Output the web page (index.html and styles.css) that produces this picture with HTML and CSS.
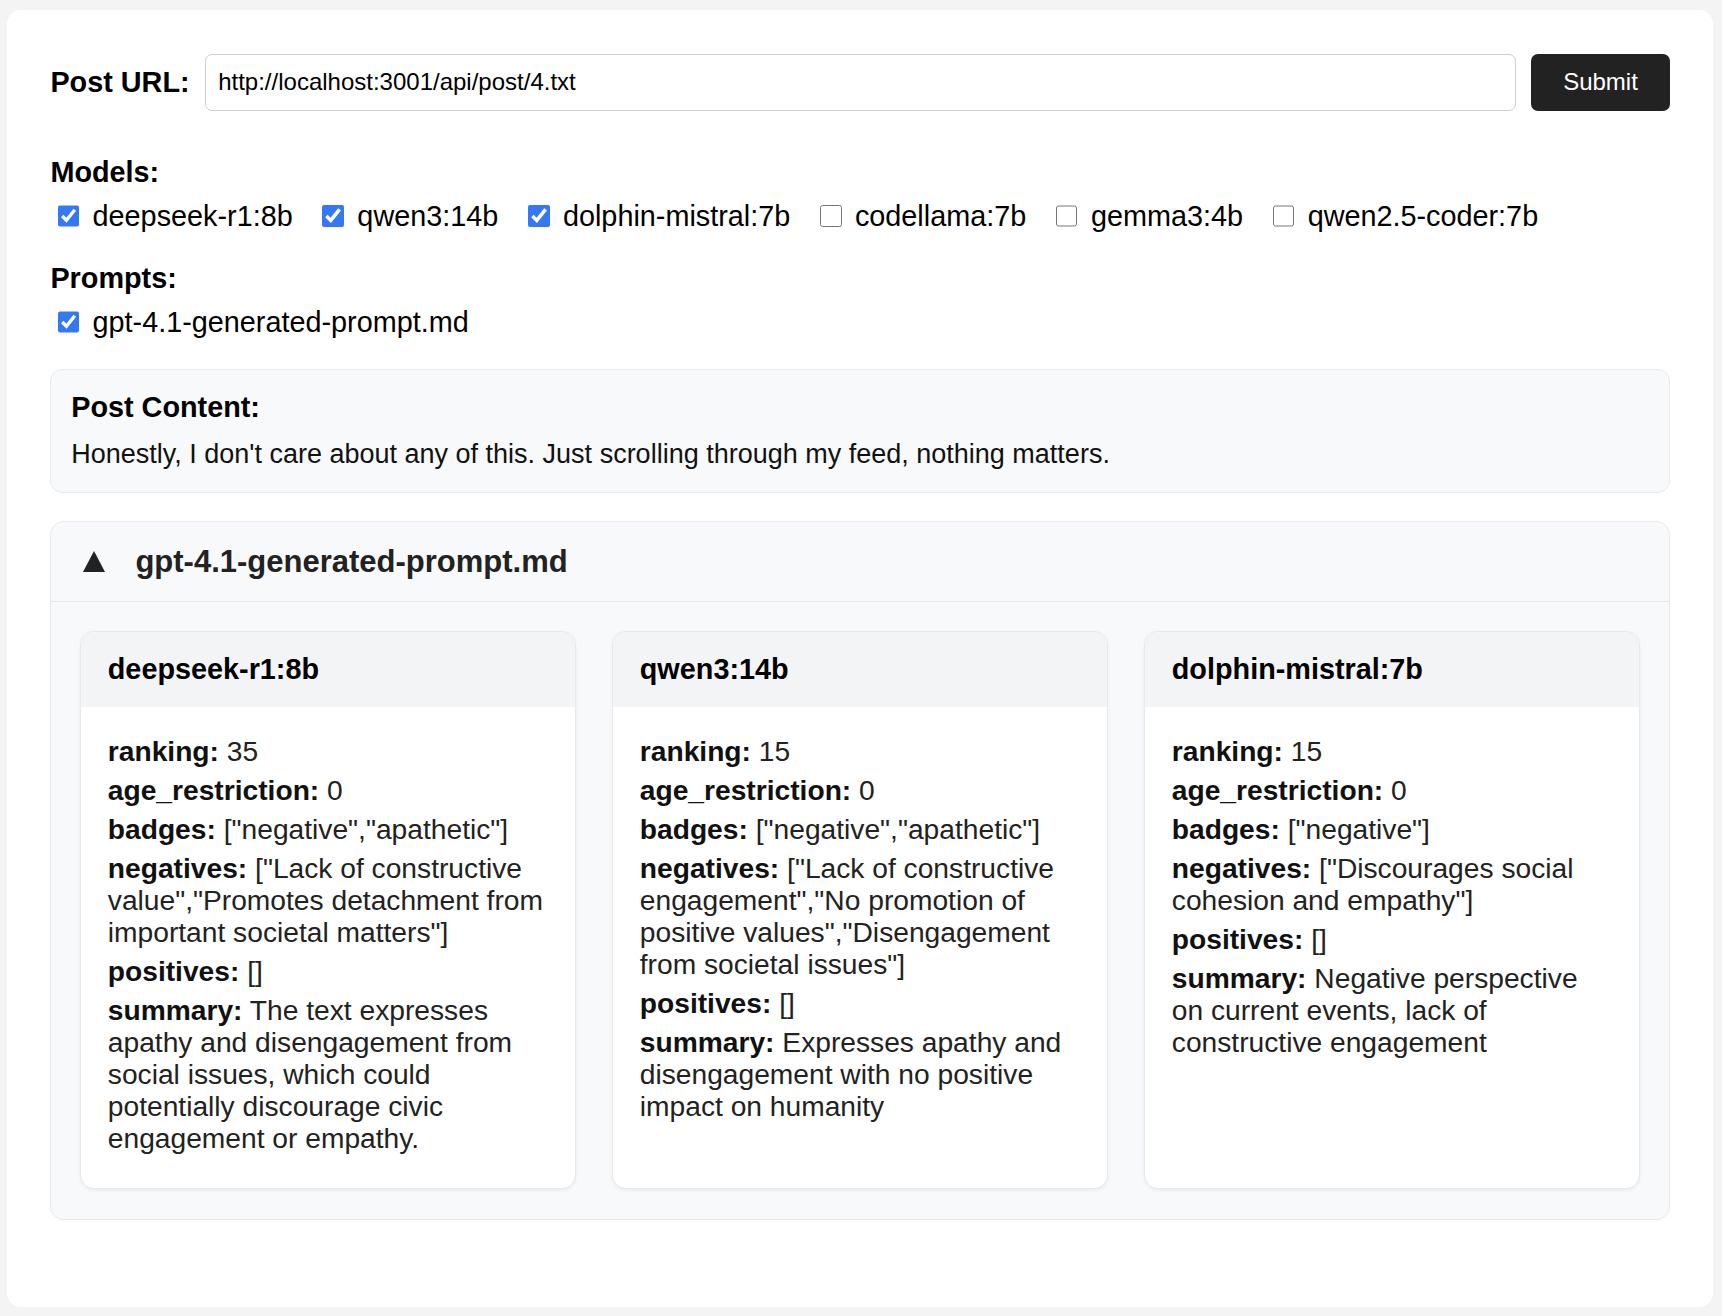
FILE: index.html
```html
<!DOCTYPE html>
<html lang="en">
<head>
<meta charset="utf-8">
<title>Post Evaluator</title>
<link rel="stylesheet" href="styles.css">
</head>
<body>
<main class="page">
  <form class="url-row">
    <label class="url-label" for="url">Post URL:</label>
    <input class="url-input" id="url" type="text" value="http://localhost:3001/api/post/4.txt">
    <button class="submit" type="button">Submit</button>
  </form>

  <section class="group models">
    <div class="group-title">Models:</div>
    <div class="options">
      <label class="opt"><input type="checkbox" checked> deepseek-r1:8b</label>
      <label class="opt"><input type="checkbox" checked> qwen3:14b</label>
      <label class="opt"><input type="checkbox" checked> dolphin-mistral:7b</label>
      <label class="opt"><input type="checkbox"> codellama:7b</label>
      <label class="opt"><input type="checkbox"> gemma3:4b</label>
      <label class="opt"><input type="checkbox"> qwen2.5-coder:7b</label>
    </div>
  </section>

  <section class="group prompts">
    <div class="group-title">Prompts:</div>
    <div class="options">
      <label class="opt"><input type="checkbox" checked> gpt-4.1-generated-prompt.md</label>
    </div>
  </section>

  <section class="post-content">
    <div class="post-title">Post Content:</div>
    <div class="post-text">Honestly, I don't care about any of this. Just scrolling through my feed, nothing matters.</div>
  </section>

  <section class="results">
    <div class="results-head">
      <svg class="tri" width="22" height="21" viewBox="0 0 22 21" aria-hidden="true"><path d="M11 0 L22 21 L0 21 Z" fill="#222"/></svg>
      <span class="results-title">gpt-4.1-generated-prompt.md</span>
    </div>
    <div class="cards">
      <article class="card">
        <div class="card-head">deepseek-r1:8b</div>
        <div class="card-body">
          <div class="item"><b>ranking:</b> 35</div>
          <div class="item"><b>age_restriction:</b> 0</div>
          <div class="item"><b>badges:</b> ["negative","apathetic"]</div>
          <div class="item"><b>negatives:</b> ["Lack of constructive value","Promotes detachment from important societal matters"]</div>
          <div class="item"><b>positives:</b> []</div>
          <div class="item"><b>summary:</b> The text expresses apathy and disengagement from social issues, which could potentially discourage civic engagement or empathy.</div>
        </div>
      </article>
      <article class="card">
        <div class="card-head">qwen3:14b</div>
        <div class="card-body">
          <div class="item"><b>ranking:</b> 15</div>
          <div class="item"><b>age_restriction:</b> 0</div>
          <div class="item"><b>badges:</b> ["negative","apathetic"]</div>
          <div class="item"><b>negatives:</b> ["Lack of constructive engagement","No promotion of positive values","Disengagement from societal issues"]</div>
          <div class="item"><b>positives:</b> []</div>
          <div class="item"><b>summary:</b> Expresses apathy and disengagement with no positive impact on humanity</div>
        </div>
      </article>
      <article class="card">
        <div class="card-head">dolphin-mistral:7b</div>
        <div class="card-body">
          <div class="item"><b>ranking:</b> 15</div>
          <div class="item"><b>age_restriction:</b> 0</div>
          <div class="item"><b>badges:</b> ["negative"]</div>
          <div class="item"><b>negatives:</b> ["Discourages social cohesion and empathy"]</div>
          <div class="item"><b>positives:</b> []</div>
          <div class="item"><b>summary:</b> Negative perspective on current events, lack of constructive engagement</div>
        </div>
      </article>
    </div>
  </section>
</main>
</body>
</html>
```
FILE: styles.css
```css
* { box-sizing: border-box; }

html, body {
  margin: 0;
  padding: 0;
}

body {
  background: #f4f4f4;
  font-family: "Liberation Sans", Arial, Helvetica, sans-serif;
  color: #111;
  font-size: 28.8px;
  line-height: 33px;
  padding: 10px 9px 9px 7px;
}

.page {
  background: #fff;
  border-radius: 14px;
  padding: 43.5px 43px 43px 43.4px;
  min-height: 1297px;
}

/* URL row */
.url-row {
  display: flex;
  align-items: center;
  gap: 15px;
  margin: 0;
}

.url-label {
  font-weight: bold;
  font-size: 28.8px;
  color: #000;
}

.url-input {
  flex: 1;
  height: 57.6px;
  border: 1.8px solid #cfcfcf;
  border-radius: 7px;
  padding: 0 12.6px;
  font-family: "Liberation Sans", Arial, sans-serif;
  font-size: 24px;
  color: #000;
  background: #fff;
  outline: none;
}

.submit {
  width: 139px;
  height: 57.6px;
  border: none;
  border-radius: 7px;
  background: #222;
  color: #fff;
  font-family: "Liberation Sans", Arial, sans-serif;
  font-size: 24px;
  padding: 0;
}

/* groups */
.group-title {
  font-weight: bold;
  color: #000;
}

.models { margin-top: 44.5px; }
.prompts { margin-top: 29px; }

.options {
  margin-top: 11px;
  display: flex;
  flex-wrap: wrap;
}

.opt {
  display: inline-flex;
  align-items: center;
  white-space: pre;
  margin-right: 22.5px;
  color: #000;
}

.opt input {
  width: 21.6px;
  height: 21.6px;
  margin: 0 5.4px 0 7.2px;
  accent-color: #3478f6;
}

/* post content */
.post-content {
  margin-top: 30px;
  background: #f8f9fa;
  border: 1.8px solid #e8eaed;
  border-radius: 12px;
  padding: 21px 19.8px 22px 19.8px;
}

.post-title {
  font-weight: bold;
  color: #000;
}

.post-text {
  margin-top: 15px;
  font-size: 27px;
  line-height: 31px;
  color: #111;
}

/* results */
.results {
  margin-top: 28.5px;
  background: #f8f9fa;
  border: 1.8px solid #e8eaed;
  border-radius: 14px;
  box-shadow: 0 1px 3px rgba(0, 0, 0, 0.03);
}

.results-head {
  display: flex;
  align-items: center;
  height: 80px;
  padding-left: 32px;
  border-bottom: 1.8px solid #e6e8eb;
}

.tri {
  width: 22px;
  height: 21px;
  margin-right: 30px;
  flex: none;
}

.results-title {
  font-weight: bold;
  font-size: 31px;
  color: #222;
}

.cards {
  display: grid;
  grid-template-columns: repeat(3, 1fr);
  gap: 36px;
  padding: 28.8px 28.8px 30.3px;
}

.card {
  background: #fff;
  border: 1.8px solid #e6e8eb;
  border-radius: 14px;
  overflow: hidden;
  box-shadow: 0 1.8px 3.6px rgba(0, 0, 0, 0.05);
}

.card-head {
  background: #f3f4f6;
  font-weight: bold;
  color: #000;
  line-height: 32px;
  padding: 21.6px 20px 21.6px 26.6px;
}

.card-body {
  padding: 28px 24px 34px 26.6px;
  font-size: 28.2px;
  color: #222;
  line-height: 32px;
}

.item { margin-bottom: 7px; }
.item:last-child { margin-bottom: 0; }
.item b { color: #111; }
```
